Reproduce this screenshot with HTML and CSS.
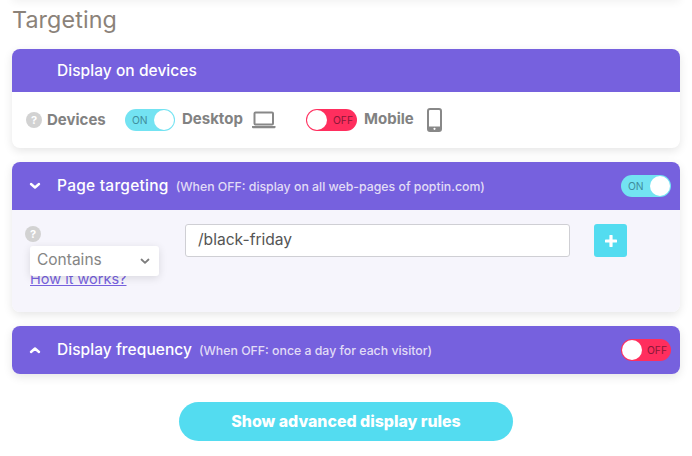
FILE: index.html
```html
<!DOCTYPE html>
<html lang="en">
<head>
<meta charset="utf-8">
<title>Targeting</title>
<link rel="stylesheet" href="styles.css">
</head>
<body>
<div class="topshade"></div>
<h1 class="title">Targeting</h1>

<section class="card">
  <header class="head head-short">
    <span class="chev"></span>
    <span class="head-title">Display on devices</span>
  </header>
  <div class="devices">
    <span class="help">?</span>
    <span class="label label-devices">Devices</span>
    <span class="toggle on"><span class="tt">ON</span><span class="knob"></span></span>
    <span class="label label-desktop">Desktop</span>
    <svg class="ico-laptop" width="24" height="18" viewBox="0 0 24 18"><rect x="2.5" y="1.5" width="18.5" height="12" rx="1" fill="none" stroke="#888" stroke-width="2"/><path d="M0 15h23.500v1.200q0 1-1 1H1q-1 0-1-1z" fill="#888"/></svg>
    <span class="toggle off"><span class="knob"></span><span class="tt">OFF</span></span>
    <span class="label label-mobile">Mobile</span>
    <svg class="ico-phone" width="15" height="24" viewBox="0 0 15 24"><rect x="1" y="1" width="13" height="22" rx="2" fill="none" stroke="#888" stroke-width="2"/><rect x="1" y="18.500" width="13" height="4.500" fill="#888"/><circle cx="7.500" cy="20.800" r="1.100" fill="#fff"/></svg>
  </div>
</section>

<section class="card">
  <header class="head">
    <svg class="chev" width="12" height="8" viewBox="0 0 12 8"><path d="M2 2l4 3.500L10 2" fill="none" stroke="#fff" stroke-width="2.400" stroke-linecap="round" stroke-linejoin="round"/></svg>
    <span class="head-title title-page">Page targeting</span>
    <span class="head-note">(When OFF: display on all web-pages of poptin.com)</span>
    <span class="toggle on head-toggle"><span class="tt">ON</span><span class="knob"></span></span>
  </header>
  <div class="rule">
    <div class="rule-left">
      <span class="help">?</span>
      <a class="how" href="#">How it works?</a>
      <div class="select">
        <span>Contains</span>
        <svg width="10" height="7" viewBox="0 0 10 7"><path d="M1.500 1.500L5 4.800l3.500-3.300" fill="none" stroke="#7d7d7d" stroke-width="1.800" stroke-linecap="round" stroke-linejoin="round"/></svg>
      </div>
    </div>
    <div class="input">/black-friday</div>
    <button class="plus" type="button"><svg width="12" height="12" viewBox="0 0 12 12"><path d="M6 1v10M1 6h10" stroke="#fff" stroke-width="3.200" stroke-linecap="round"/></svg></button>
  </div>
</section>

<section class="card">
  <header class="head">
    <svg class="chev" width="12" height="8" viewBox="0 0 12 8"><path d="M2 6l4-3.500L10 6" fill="none" stroke="#fff" stroke-width="2.400" stroke-linecap="round" stroke-linejoin="round"/></svg>
    <span class="head-title">Display frequency</span>
    <span class="head-note">(When OFF: once a day for each visitor)</span>
    <span class="toggle off head-toggle"><span class="knob"></span><span class="tt">OFF</span></span>
  </header>
</section>

<div class="actions">
  <button class="advanced" type="button">Show advanced display rules</button>
</div>
</body>
</html>
```
FILE: styles.css
```css
* { box-sizing: border-box; }
html, body { margin: 0; padding: 0; }
body {
  width: 692px;
  height: 456px;
  overflow: hidden;
  background: #fff;
  font-family: Inter, "Noto Sans", "Liberation Sans", sans-serif;
  padding: 0 12px;
  position: relative;
}
.topshade {
  position: absolute;
  left: 12px;
  top: -10px;
  width: 668px;
  height: 10px;
  box-shadow: 0 2px 8px rgba(0,0,0,.06);
}
.title {
  margin: 0;
  padding-top: 6px;
  height: 49px;
  font-size: 23.300px;
  line-height: 28px;
  font-weight: 400;
  color: #8b8279;
  letter-spacing: .1px;
}
.card {
  border-radius: 8px;
  overflow: hidden;
  margin-bottom: 14px;
  background: #fff;
  box-shadow: 0 3px 10px rgba(0,0,0,.1);
}
.head {
  height: 48px;
  background: #7661de;
  display: flex;
  align-items: center;
  padding: 0 9px 0 17px;
  color: #fff;
}
.head-short { height: 43px; }
.chev { width: 12px; height: 8px; flex: none; }
.head-title {
  margin-left: 16px;
  font-size: 15.500px;
  font-weight: 500;
  line-height: 20px;
  letter-spacing: .05px;
}
.title-page { letter-spacing: .25px; }
.head-note {
  margin-left: 7px;
  font-size: 12.300px;
  font-weight: 500;
  color: #e1dcf6;
  line-height: 20px;
  padding-top: 1px;
}
.head-toggle { margin-left: auto; }
.toggle {
  width: 50px;
  height: 22px;
  border-radius: 11px;
  display: inline-flex;
  align-items: center;
  justify-content: space-between;
  flex: none;
  font-size: 10.300px;
  line-height: 12px;
}
.toggle.on { background: #73e3f2; color: #3f8d9c; padding: 0 1px 0 7px; }
.toggle.off { background: #ff2e5e; color: #8a1838; padding: 0 4px 0 1px; }
.toggle .tt { margin-top: -1px; }
.devices .toggle.off { width: 51px; }
.knob {
  width: 20px;
  height: 20px;
  border-radius: 50%;
  background: #fff;
  flex: none;
}
.help {
  width: 16px;
  height: 16px;
  border-radius: 50%;
  background: #d2d2d2;
  color: #fff;
  font-size: 11px;
  font-weight: 700;
  line-height: 16px;
  text-align: center;
  flex: none;
}
.devices {
  height: 56px;
  display: flex;
  align-items: center;
  padding-left: 14px;
}
.label {
  font-size: 15px;
  font-weight: 700;
  color: #828282;
  line-height: 20px;
}
.label-devices { margin-left: 5px; margin-right: 19px; width: 59px; white-space: nowrap; }
.label-desktop { margin-left: 7px; margin-bottom: 2px; width: 62px; white-space: nowrap; }
.label-mobile { margin-left: 7px; margin-bottom: 2px; width: 50px; white-space: nowrap; }
.ico-laptop { margin-left: 8px; margin-right: 30px; flex: none; }
.ico-phone { margin-left: 13px; flex: none; }
.rule {
  height: 102px;
  background: #f6f5fc;
  display: flex;
  align-items: flex-start;
  padding: 14px 0 0 13px;
}
.rule-left {
  width: 160px;
  height: 70px;
  position: relative;
  display: flex;
  flex-direction: column;
  align-items: flex-start;
}
.rule-left .help { margin-top: 2px; margin-left: 0; }
.how {
  margin-left: 5px;
  margin-top: 28px;
  font-size: 14.500px;
  line-height: 18px;
  color: #7661de;
}
.select {
  position: absolute;
  left: 5px;
  top: 22px;
  width: 129px;
  height: 30px;
  background: #fff;
  border-radius: 3px;
  box-shadow: 0 2px 8px rgba(0,0,0,.12);
  display: flex;
  align-items: center;
  justify-content: space-between;
  padding: 0 9px 3px 7px;
  font-size: 15.500px;
  color: #858585;
}
.select svg { margin-top: 3px; }
.input {
  width: 385px;
  height: 33px;
  background: #fff;
  border: 1px solid #cfcfd4;
  border-radius: 3px;
  padding-left: 12px;
  font-size: 15.600px;
  line-height: 30px;
  color: #555;
}
.plus {
  margin-left: 24px;
  width: 33px;
  height: 33px;
  border: 0;
  padding: 0;
  border-radius: 3px;
  background: #53dcf0;
  display: flex;
  align-items: center;
  justify-content: center;
}
.actions {
  display: flex;
  justify-content: center;
  padding-top: 14px;
}
.advanced {
  width: 334px;
  height: 39px;
  border: 0;
  border-radius: 20px;
  background: #53dcf0;
  color: #fff;
  font-family: inherit;
  font-size: 15.900px;
  font-weight: 800;
}
```
